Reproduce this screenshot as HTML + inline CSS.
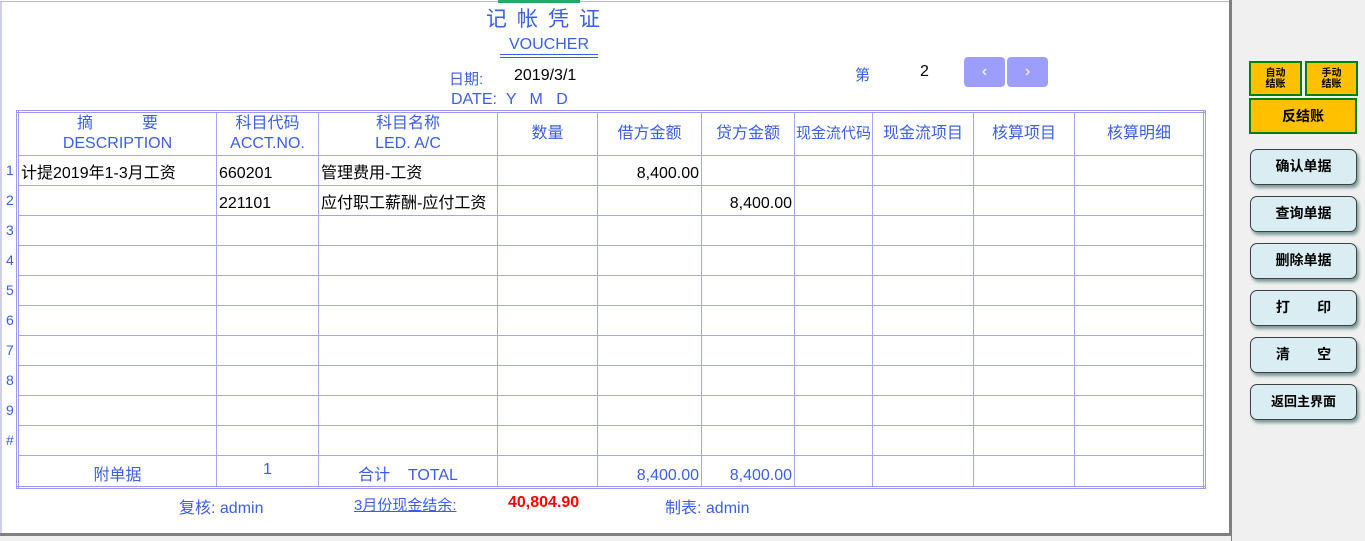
<!DOCTYPE html>
<html><head><meta charset="utf-8"><style>
*{margin:0;padding:0;box-sizing:border-box}
body{width:1365px;height:541px;background:#fff;position:relative;overflow:hidden;font-family:"Liberation Sans","Noto Sans CJK SC",sans-serif;color:#3b5ee8}
.a{position:absolute;white-space:nowrap}
.blk{color:#000}
table{position:absolute;left:16px;top:110px;width:1190px;border:3px double #9a9af5;border-collapse:collapse;table-layout:fixed}
tr{height:30px}
td{border:1px solid #a6a6f5;font-size:16px;padding:0 2px 1px;color:#000;line-height:20px;overflow:hidden;white-space:nowrap;vertical-align:bottom}
td.h{color:#3b5ee8;text-align:center;vertical-align:middle}
td.r{text-align:right}
.rn{position:absolute;left:6px;font-size:14px;color:#3b5ee8}
.yb{position:absolute;background:#ffc000;border:2px solid #008000;font-weight:bold;font-size:10px;line-height:11px;text-align:center;color:#000}
.bb{position:absolute;left:1250px;width:107px;height:36px;background:#daedf3;border:1.5px solid #404040;border-radius:7px;box-shadow:2px 3px 3px #7a9a9a;font-weight:bold;font-size:14px;text-align:center;line-height:33px;color:#000}
.nav{position:absolute;top:57px;width:41px;height:30px;background:#9d9dfc;border-radius:4px;color:#fff;text-align:center;line-height:30px;font-size:16px}
</style></head><body>
<div class="a" style="left:0;top:0;width:1230px;height:2px;border-bottom:1px solid #b8b8d8"></div>
<div class="a" style="left:498px;top:0;width:82px;height:3px;background:#22aa66"></div>
<div class="a" style="left:0;top:2px;width:2px;height:532px;background:#d0d0e8"></div>
<div class="a" style="left:1229px;top:0;width:136px;height:541px;background:#f0f0f0;border-left:3px solid #808080"></div>
<div class="a" style="left:0;top:533px;width:1231px;height:3px;background:#808080"></div>
<div class="a" style="left:0;top:536px;width:1231px;height:5px;background:#f0f0f0"></div>

<div class="a" style="left:486px;top:3px;font-size:21px;letter-spacing:10px">记帐凭证</div>
<div class="a" style="left:509px;top:36px;font-size:16px">VOUCHER</div>
<div class="a" style="left:500px;top:54px;width:98px;height:4px;border-top:1px solid #3b5ee8;border-bottom:1px solid #3b5ee8"></div>
<div class="a" style="left:449px;top:68px;font-size:15px">日期:</div>
<div class="a blk" style="left:514px;top:67px;font-size:16px">2019/3/1</div>
<div class="a" style="left:451px;top:91px;font-size:16px">DATE: &nbsp;Y &nbsp;&nbsp;M &nbsp;&nbsp;D</div>
<div class="a" style="left:855px;top:64px;font-size:15px">第</div>
<div class="a blk" style="left:920px;top:63px;font-size:16px">2</div>
<div class="nav" style="left:964px">&lsaquo;</div>
<div class="nav" style="left:1007px">&rsaquo;</div>

<table>
<colgroup><col style="width:199px"><col style="width:102px"><col style="width:179px"><col style="width:100px"><col style="width:104px"><col style="width:93px"><col style="width:78px"><col style="width:101px"><col style="width:101px"><col></colgroup>
<tr style="height:44px"><td class="h">摘&nbsp;&nbsp;&nbsp;&nbsp;&nbsp;&nbsp;&nbsp;&nbsp;&nbsp;&nbsp;&nbsp;要<br>DESCRIPTION</td><td class="h">科目代码<br>ACCT.NO.</td><td class="h">科目名称<br>LED. A/C</td><td class="h">数量</td><td class="h">借方金额</td><td class="h">贷方金额</td><td class="h" style="padding:0;font-size:15px">现金流代码</td><td class="h">现金流项目</td><td class="h">核算项目</td><td class="h">核算明细</td></tr>
<tr><td>计提2019年1-3月工资</td><td>660201</td><td>管理费用-工资</td><td></td><td class="r">8,400.00</td><td></td><td></td><td></td><td></td><td></td></tr>
<tr><td></td><td>221101</td><td>应付职工薪酬-应付工资</td><td></td><td></td><td class="r">8,400.00</td><td></td><td></td><td></td><td></td></tr>
<tr><td></td><td></td><td></td><td></td><td></td><td></td><td></td><td></td><td></td><td></td></tr>
<tr><td></td><td></td><td></td><td></td><td></td><td></td><td></td><td></td><td></td><td></td></tr>
<tr><td></td><td></td><td></td><td></td><td></td><td></td><td></td><td></td><td></td><td></td></tr>
<tr><td></td><td></td><td></td><td></td><td></td><td></td><td></td><td></td><td></td><td></td></tr>
<tr><td></td><td></td><td></td><td></td><td></td><td></td><td></td><td></td><td></td><td></td></tr>
<tr><td></td><td></td><td></td><td></td><td></td><td></td><td></td><td></td><td></td><td></td></tr>
<tr><td></td><td></td><td></td><td></td><td></td><td></td><td></td><td></td><td></td><td></td></tr>
<tr><td></td><td></td><td></td><td></td><td></td><td></td><td></td><td></td><td></td><td></td></tr>
<tr style="height:32px"><td class="h" style="vertical-align:bottom;padding-bottom:0">附单据</td><td class="h" style="vertical-align:top;padding-top:4px">1</td><td class="h" style="vertical-align:bottom;padding-bottom:0">合计&nbsp;&nbsp;&nbsp;&nbsp;TOTAL</td><td></td><td class="r" style="color:#3b5ee8;padding-bottom:0">8,400.00</td><td class="r" style="color:#3b5ee8;padding-bottom:0">8,400.00</td><td></td><td></td><td></td><td></td></tr>
</table>
<div class="rn" style="top:162px">1</div><div class="rn" style="top:192px">2</div><div class="rn" style="top:222px">3</div><div class="rn" style="top:252px">4</div><div class="rn" style="top:282px">5</div><div class="rn" style="top:312px">6</div><div class="rn" style="top:342px">7</div><div class="rn" style="top:372px">8</div><div class="rn" style="top:402px">9</div><div class="rn" style="top:432px">#</div>

<div class="a" style="left:179px;top:494px;font-size:16px">复核: admin</div>
<div class="a" style="left:354px;top:494px;font-size:15px;text-decoration:underline">3月份现金结余:</div>
<div class="a" style="left:508px;top:494px;font-size:16px;font-weight:bold;color:#f00">40,804.90</div>
<div class="a" style="left:665px;top:494px;font-size:16px">制表: admin</div>

<div class="yb" style="left:1249px;top:61px;width:53px;height:35px;padding-top:5px">自动<br>结账</div>
<div class="yb" style="left:1305px;top:61px;width:53px;height:35px;padding-top:5px">手动<br>结账</div>
<div class="yb" style="left:1249px;top:98px;width:108px;height:36px;font-size:14px;line-height:32px">反结账</div>
<div class="bb" style="top:149px">确认单据</div>
<div class="bb" style="top:196px">查询单据</div>
<div class="bb" style="top:243px">删除单据</div>
<div class="bb" style="top:290px">打&nbsp;&nbsp;&nbsp;&nbsp;&nbsp;&nbsp;&nbsp;印</div>
<div class="bb" style="top:337px">清&nbsp;&nbsp;&nbsp;&nbsp;&nbsp;&nbsp;&nbsp;空</div>
<div class="bb" style="top:384px;font-size:13px">返回主界面</div>
</body></html>
